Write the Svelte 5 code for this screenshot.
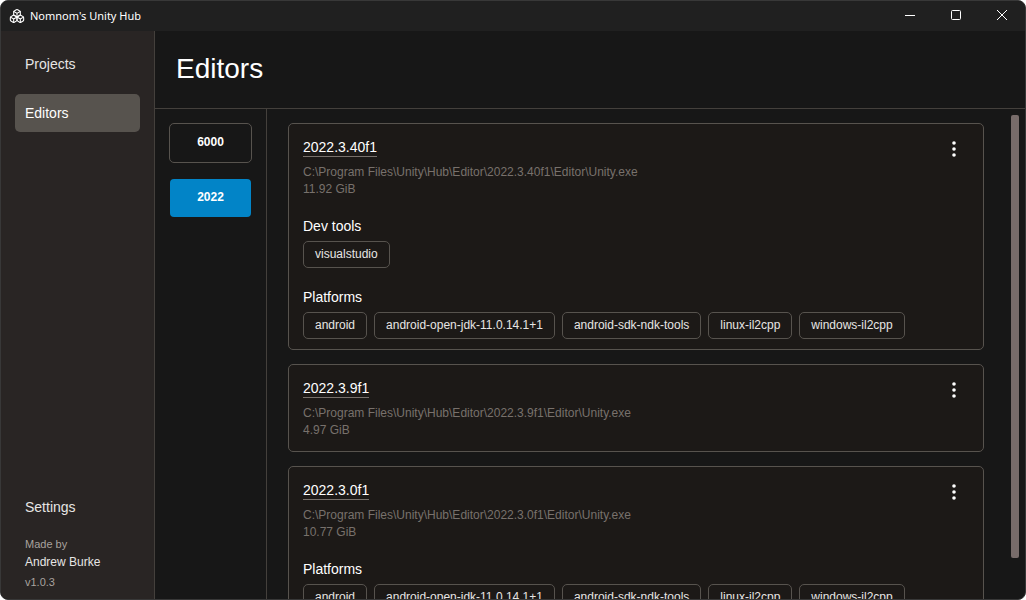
<script>
  const editors = [
    {
      version: '2022.3.40f1',
      size: '11.92 GiB',
      sections: [
        { title: 'Dev tools', items: ['visualstudio'] },
        {
          title: 'Platforms',
          items: ['android', 'android-open-jdk-11.0.14.1+1', 'android-sdk-ndk-tools', 'linux-il2cpp', 'windows-il2cpp']
        }
      ]
    },
    { version: '2022.3.9f1', size: '4.97 GiB', sections: [] },
    {
      version: '2022.3.0f1',
      size: '10.77 GiB',
      sections: [
        {
          title: 'Platforms',
          items: ['android', 'android-open-jdk-11.0.14.1+1', 'android-sdk-ndk-tools', 'linux-il2cpp', 'windows-il2cpp']
        }
      ]
    }
  ];
  const groups = ['6000', '2022'];
  let selected = $state('2022');
</script>

<div class="window">
  <header class="titlebar">
    <svg class="logo" viewBox="0 0 24 24" aria-hidden="true">
      <path d="M2.97 12.92A2 2 0 0 0 2 14.63v3.24a2 2 0 0 0 .97 1.71l3 1.8a2 2 0 0 0 2.06 0L12 19v-5.5l-5-3-4.03 2.42Z" />
      <path d="m7 16.5-4.74-2.85M7 16.5l5-3M7 16.5v5.17" />
      <path d="M12 13.5V19l3.97 2.38a2 2 0 0 0 2.06 0l3-1.8a2 2 0 0 0 .97-1.71v-3.24a2 2 0 0 0-.97-1.71L17 10.5l-5 3Z" />
      <path d="m17 16.5-5-3M17 16.5l4.74-2.85M17 16.5v5.17" />
      <path d="M7.97 4.42A2 2 0 0 0 7 6.13v4.37l5 3 5-3V6.13a2 2 0 0 0-.97-1.71l-3-1.8a2 2 0 0 0-2.06 0l-3 1.8Z" />
      <path d="M12 8 7.26 5.15M12 8l4.74-2.85M12 13.5V8" />
    </svg>
    <span class="caption">Nomnom's Unity Hub</span>
    <div class="controls">
      <button aria-label="Minimize"><svg viewBox="0 0 12 12"><path d="M1 6.5h10" /></svg></button>
      <button aria-label="Maximize"><svg viewBox="0 0 12 12"><rect x="1.5" y="1.5" width="9" height="9" rx="1" /></svg></button>
      <button aria-label="Close"><svg viewBox="0 0 12 12"><path d="m1 1 10 10M11 1 1 11" /></svg></button>
    </div>
  </header>

  <div class="body">
    <aside>
      <nav>
        <a href="#projects">Projects</a>
        <a href="#editors" class="current">Editors</a>
      </nav>
      <div class="bottom">
        <a href="#settings">Settings</a>
        <div class="credits">
          <span class="small">Made by</span>
          <span class="author">Andrew Burke</span>
          <span class="small version">v1.0.3</span>
        </div>
      </div>
    </aside>

    <main>
      <div class="heading"><h1>Editors</h1></div>
      <div class="content">
        <div class="groups">
          {#each groups as group}
            <button class:active={selected === group} onclick={() => (selected = group)}>{group}</button>
          {/each}
        </div>
        <div class="list">
          {#each editors as editor}
            <article>
              <div class="top">
                <div class="info">
                  <a class="name" href="#{editor.version}">{editor.version}</a>
                  <p>C:\Program Files\Unity\Hub\Editor\{editor.version}\Editor\Unity.exe</p>
                  <p>{editor.size}</p>
                </div>
                <button class="more" aria-label="More actions">
                  <svg viewBox="0 0 16 16"><circle cx="8" cy="2" r="1.8" /><circle cx="8" cy="8" r="1.8" /><circle cx="8" cy="14" r="1.8" /></svg>
                </button>
              </div>
              {#if editor.sections.length}
                <div class="sections">
                  {#each editor.sections as section}
                    <section>
                      <h2>{section.title}</h2>
                      <ul>
                        {#each section.items as item}<li>{item}</li>{/each}
                      </ul>
                    </section>
                  {/each}
                </div>
              {/if}
            </article>
          {/each}
        </div>
        <div class="track"><div class="thumb"></div></div>
      </div>
    </main>
  </div>
</div>

<style>
  :global(body) {
    margin: 0;
    background: #fff;
  }
  .window, .window * {
    box-sizing: border-box;
  }
  .window {
    height: 100vh;
    display: flex;
    flex-direction: column;
    overflow: hidden;
    border: 1px solid #383838;
    border-radius: 8px;
    background: #171717;
    color: #fff;
    font: 14px/18px "Liberation Sans", Arial, sans-serif;
  }
  button {
    font: inherit;
    color: inherit;
    background: none;
    border: 0;
    padding: 0;
  }
  a {
    color: inherit;
    text-decoration: none;
  }
  h1, h2, p, ul {
    margin: 0;
    padding: 0;
    font-weight: 400;
  }
  .titlebar {
    flex: none;
    height: 30px;
    display: flex;
    align-items: center;
    padding-left: 8px;
    gap: 5px;
    background: #202020;
  }
  .logo {
    width: 16px;
    height: 16px;
    fill: none;
    stroke: #fff;
    stroke-width: 1.6;
    stroke-linecap: round;
    stroke-linejoin: round;
  }
  .caption {
    font: 11px/16px "Noto Sans", sans-serif;
  }
  .controls {
    display: flex;
    height: 28px;
    align-self: flex-start;
    margin-left: auto;
  }
  .controls button {
    width: 46px;
    display: grid;
    place-items: center;
  }
  .controls svg {
    width: 12px;
    height: 12px;
    fill: none;
    stroke: #fff;
  }
  .body {
    flex: 1;
    min-height: 0;
    display: flex;
  }
  aside {
    flex: none;
    width: 154px;
    display: flex;
    flex-direction: column;
    justify-content: space-between;
    padding: 14px;
    padding-bottom: 8px;
    background: #292524;
    border-right: 1px solid #44403c;
    color: #e7e5e4;
  }
  nav {
    display: flex;
    flex-direction: column;
    gap: 11px;
  }
  aside a {
    display: block;
    padding: 10px;
    border-radius: 5px;
  }
  aside a.current {
    background: #57534e;
    color: #fff;
  }
  .credits {
    display: flex;
    flex-direction: column;
    padding: 9px 10px 0;
    font-size: 12px;
  }
  .small {
    font-size: 11px;
    color: #a8a29e;
  }
  .version {
    margin-top: 2px;
  }
  main {
    flex: 1;
    min-width: 0;
    display: flex;
    flex-direction: column;
  }
  .heading {
    flex: none;
    padding: 20px 21px 22px;
    border-bottom: 1px solid #44403c;
  }
  h1 {
    font-size: 28px;
    line-height: 35px;
  }
  h2 {
    font-size: 14px;
  }
  .content {
    flex: 1;
    min-height: 0;
    display: flex;
  }
  .groups {
    flex: none;
    width: 112px;
    display: flex;
    flex-direction: column;
    gap: 15px;
    padding: 14px;
    border-right: 1px solid #44403c;
  }
  .groups button {
    height: 40px;
    padding-bottom: 2px;
    border: 1px solid #57534e;
    border-radius: 5px;
    font-size: 12px;
    font-weight: 700;
  }
  .groups button.active {
    border-color: transparent;
    background: #0284c7 padding-box;
  }
  .list {
    flex: 1;
    min-width: 0;
    display: flex;
    flex-direction: column;
    gap: 14px;
    padding: 14px 27px 14px 21px;
    overflow: hidden;
  }
  article {
    flex: none;
    padding: 14px;
    padding-bottom: 10px;
    border: 1px solid #57534e;
    border-radius: 5px;
    background: #1c1917;
  }
  .top {
    display: flex;
    justify-content: space-between;
  }
  .info {
    padding-bottom: 2px;
  }
  .name {
    display: inline-block;
    margin-bottom: 7px;
    border-bottom: 1px solid #78716c;
    vertical-align: top;
  }
  .info p {
    font-size: 12px;
    line-height: 17px;
    color: #78716c;
  }
  .more {
    width: 30px;
    height: 22px;
  }
  .more svg {
    display: block;
    width: 16px;
    height: 16px;
    margin: 3px auto;
    fill: #fff;
  }
  .sections {
    display: flex;
    flex-direction: column;
    gap: 20px;
    margin-top: 17px;
  }
  ul {
    display: flex;
    flex-wrap: wrap;
    gap: 7px;
    margin-top: 6px;
    list-style: none;
  }
  li {
    padding: 3px 11px 4px;
    border: 1px solid #57534e;
    border-radius: 5px;
    font-size: 12px;
    color: #e7e5e4;
  }
  .track {
    flex: none;
    width: 14px;
    padding: 6px 6px 0 0;
  }
  .thumb {
    width: 8px;
    height: 91.5%;
    border-radius: 2px;
    background: #786c6a;
  }
</style>
